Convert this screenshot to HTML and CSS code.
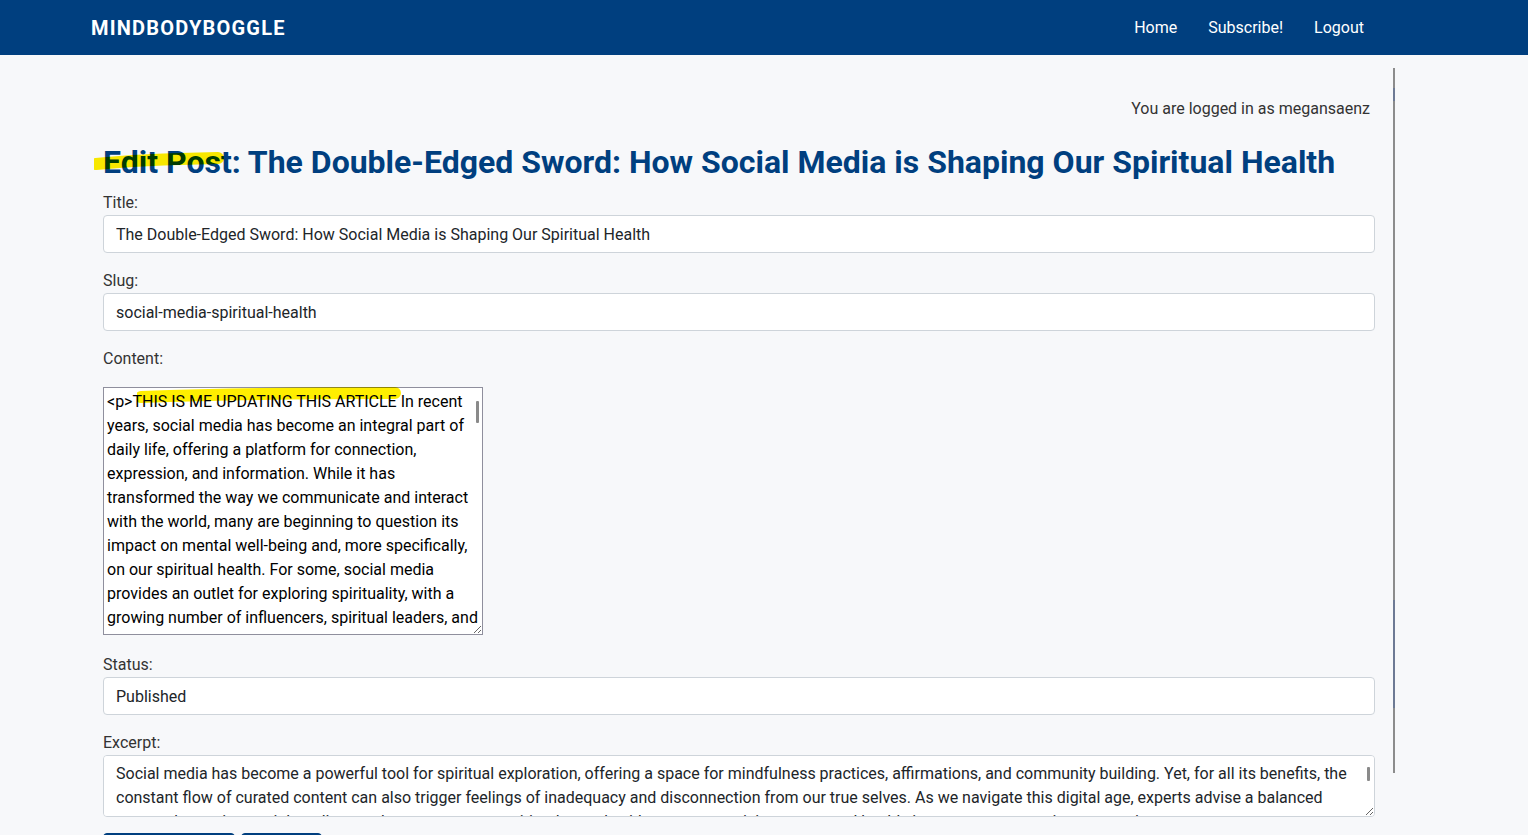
FILE: index.html
```html
<!DOCTYPE html>
<html lang="en">
<head>
<meta charset="utf-8">
<title>Edit Post - MindBodyBoggle</title>
<link rel="stylesheet" href="styles.css">
</head>
<body>
<nav class="navbar">
  <a class="brand" href="#">MINDBODYBOGGLE</a>
  <ul class="nav-links">
    <li><a href="#">Home</a></li>
    <li><a href="#">Subscribe!</a></li>
    <li><a href="#">Logout</a></li>
  </ul>
</nav>

<main class="container">
  <p class="logged-in">You are logged in as megansaenz</p>
  <h1 class="page-title">Edit Post: The Double-Edged Sword: How Social Media is Shaping Our Spiritual Health</h1>

  <form class="edit-form">
    <div class="field">
      <label for="title">Title:</label>
      <input id="title" class="form-control" type="text" value="The Double-Edged Sword: How Social Media is Shaping Our Spiritual Health">
    </div>
    <div class="field">
      <label for="slug">Slug:</label>
      <input id="slug" class="form-control" type="text" value="social-media-spiritual-health">
    </div>
    <div class="field">
      <label for="content">Content:</label>
      <div class="content-wrap">
        <textarea id="content" class="content-area" spellcheck="false">&lt;p&gt;THIS IS ME UPDATING THIS ARTICLE In recent years, social media has become an integral part of daily life, offering a platform for connection, expression, and information. While it has transformed the way we communicate and interact with the world, many are beginning to question its impact on mental well-being and, more specifically, on our spiritual health. For some, social media provides an outlet for exploring spirituality, with a growing number of influencers, spiritual leaders, and communities sharing practices, affirmations, and guided meditations online. For others, the endless scroll of curated images and comparison breeds anxiety, restlessness and a sense of disconnection from the present moment.&lt;/p&gt;
&lt;p&gt;Experts suggest that the key lies in intention. Used mindfully, social media can inspire reflection, gratitude and compassion. Used compulsively, it can pull us away from the quiet inner work that spiritual growth requires.&lt;/p&gt;
&lt;p&gt;Setting boundaries, curating feeds with care, and taking regular digital detoxes are among the strategies recommended for keeping a healthy balance between online life and spiritual well-being.&lt;/p&gt;</textarea>
        <span class="thumb thumb-content"></span>
      </div>
    </div>
    <div class="field">
      <label for="status">Status:</label>
      <input id="status" class="form-control" type="text" value="Published">
    </div>
    <div class="field">
      <label for="excerpt">Excerpt:</label>
      <div class="excerpt-wrap">
        <textarea id="excerpt" class="form-control excerpt-area" spellcheck="false">Social media has become a powerful tool for spiritual exploration, offering a space for mindfulness practices, affirmations, and community building. Yet, for all its benefits, the constant flow of curated content can also trigger feelings of inadequacy and disconnection from our true selves. As we navigate this digital age, experts advise a balanced approach to using social media, one that supports our spiritual growth without compromising our mental health, inner peace or genuine connection.</textarea>
        <span class="thumb thumb-excerpt"></span>
      </div>
    </div>
    <div class="actions">
      <button type="submit" class="btn btn-primary">Update Post</button>
      <button type="button" class="btn btn-primary">Cancel</button>
    </div>
  </form>
</main>

<svg class="highlight highlight-title" width="140" height="24" viewBox="0 0 140 24" aria-hidden="true">
  <path d="M2 15 C 30 12, 70 10, 124 9" />
</svg>
<svg class="highlight highlight-content" width="270" height="22" viewBox="0 0 270 22" aria-hidden="true">
  <path d="M4 12 C 60 10, 150 8, 258 8" />
</svg>
<div class="side-rule" aria-hidden="true">
  <span class="rule-seg seg-1"></span>
  <span class="rule-seg seg-2"></span>
</div>
</body>
</html>
```

FILE: styles.css
```css
html {
  scrollbar-width: none;
}
html::-webkit-scrollbar {
  display: none;
}

body {
  margin: 0;
  background: #f7f8fa;
  font-family: Roboto, "Liberation Sans", Arial, sans-serif;
  color: #212529;
  font-size: 16px;
  line-height: 24px;
}

.navbar {
  height: 55px;
  background: #003f7f;
  display: flex;
  align-items: center;
  justify-content: space-between;
  padding: 0 164px 0 91px;
}

.brand {
  color: #fff;
  text-decoration: none;
  font-weight: 700;
  font-size: 20px;
  letter-spacing: 1.2px;
}

.nav-links {
  list-style: none;
  margin: 0;
  padding: 0;
  display: flex;
  gap: 31px;
}

.nav-links a {
  color: #fff;
  text-decoration: none;
  font-size: 16px;
}

.container {
  width: 1272px;
  margin-left: 103px;
  padding-top: 42px;
}

.logged-in {
  margin: 0;
  text-align: right;
  padding-right: 5px;
  color: #333;
  font-size: 16px;
  line-height: 24px;
}

.page-title {
  margin: 22px 0 0;
  color: #003f7f;
  font-size: 32px;
  line-height: 38px;
  font-weight: 700;
}

.edit-form {
  margin-top: 10px;
}

.field {
  margin-bottom: 16px;
}

.field label {
  display: block;
  color: #333;
  font-size: 16px;
  line-height: 24px;
}

.form-control {
  display: block;
  box-sizing: border-box;
  width: 100%;
  height: 38px;
  padding: 6px 12px;
  border: 1px solid #ced4da;
  border-radius: 4px;
  background: #fff;
  color: #212529;
  font-family: Roboto, "Liberation Sans", Arial, sans-serif;
  font-size: 16px;
  line-height: 24px;
}

.content-wrap {
  position: relative;
  width: 380px;
  margin-top: 16px;
  height: 250px;
}

.content-area {
  box-sizing: border-box;
  display: block;
  width: 380px;
  height: 248px;
  padding: 2px 4px 2px 3px;
  border: 1px solid #8f8f9d;
  border-radius: 0;
  background: #fff;
  color: #000;
  font-family: Roboto, "Liberation Sans", Arial, sans-serif;
  font-size: 16px;
  line-height: 24px;
  scrollbar-width: none;
}

.content-area::-webkit-scrollbar,
.excerpt-area::-webkit-scrollbar {
  display: none;
}

.excerpt-wrap {
  position: relative;
}

.excerpt-area {
  height: 62px;
  padding: 6px 18px 6px 12px;
  resize: vertical;
  scrollbar-width: none;
}

.thumb {
  position: absolute;
  width: 3px;
  background: #8a8a8a;
  border-radius: 1px;
}

.thumb-content {
  left: 373px;
  top: 14px;
  height: 22px;
}

.thumb-excerpt {
  right: 5px;
  top: 12px;
  height: 14px;
}

.actions {
  display: flex;
  gap: 6px;
}

.btn {
  height: 38px;
  padding: 6px 12px;
  border: 1px solid #003f7f;
  border-radius: 4px;
  background: #003f7f;
  color: #fff;
  font-family: Roboto, "Liberation Sans", Arial, sans-serif;
  font-size: 16px;
}

.btn:first-child {
  width: 132px;
}

.btn:last-child {
  width: 81px;
}

.highlight {
  position: absolute;
  mix-blend-mode: multiply;
  pointer-events: none;
}

.highlight path {
  fill: none;
  stroke: #ffee00;
  stroke-width: 12;
  stroke-linecap: round;
}

.highlight-title {
  left: 94px;
  top: 149px;
}

.highlight-content {
  left: 137px;
  top: 385px;
}

.highlight-content path {
  stroke-width: 12;
}

.side-rule {
  position: absolute;
  left: 1393px;
  top: 68px;
  width: 2px;
  height: 705px;
  background: #8c8c8c;
}

.rule-seg {
  position: absolute;
  left: 0;
  width: 2px;
  background: #6d7a94;
}

.seg-1 {
  top: 20px;
  height: 13px;
}

.seg-2 {
  top: 532px;
  height: 108px;
}
```
